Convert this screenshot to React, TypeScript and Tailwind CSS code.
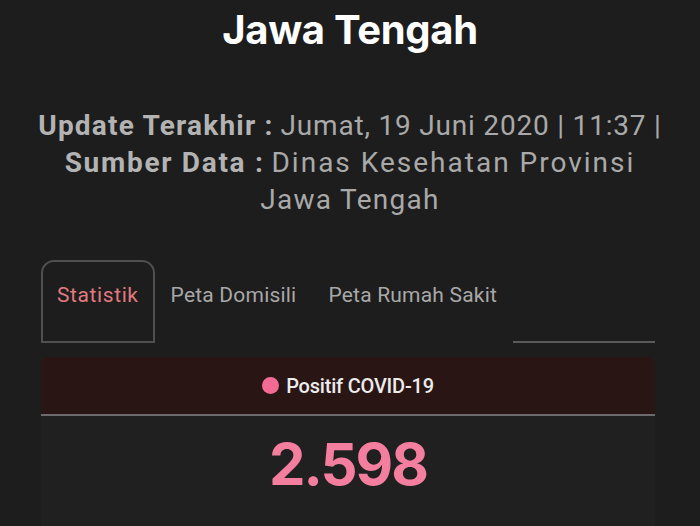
import React from 'react';

const tabs = ['Statistik', 'Peta Domisili', 'Peta Rumah Sakit'];

export default function App() {
  return (
    <div className="w-[700px] h-[526px] overflow-hidden bg-[#1d1d1d] font-['Roboto',sans-serif]">
      {/* Title */}
      <h1 className="pt-[5px] text-center font-['Inter',sans-serif] text-[40px] leading-[50px] font-bold text-white tracking-[-0.3px]">
        Jawa Tengah
      </h1>

      {/* Update info */}
      <div className="mt-[52px] text-center text-[28px] leading-[37px] text-[#a9a9a9]">
        <p>
          <span className="font-bold text-[#b3b3b3] tracking-[1.2px]">Update Terakhir :</span>{' '}
          <span className="tracking-[0.8px]">Jumat, 19 Juni 2020 | 11:37 |</span>
        </p>
        <p>
          <span className="font-bold text-[#b3b3b3] tracking-[1.7px]">Sumber Data :</span>{' '}
          <span className="tracking-[2px]">Dinas Kesehatan Provinsi</span>
        </p>
        <p className="tracking-[1.3px]">Jawa Tengah</p>
      </div>

      {/* Tabs + card */}
      <div className="ml-[41px] w-[614px] mt-[42px]">
        <div className="flex h-[83px]">
          {tabs.map((t, i) => (
            <div
              key={t}
              className={
                i === 0
                  ? 'px-[14px] pt-[19px] rounded-t-[13px] border-2 border-[#4f4f4f] text-[#e07a7e] text-[21px] leading-[28px] tracking-[0.6px]'
                  : 'px-[16px] pt-[21px] text-[#a8a8a8] text-[21px] leading-[28px] tracking-[0.2px]'
              }
            >
              {t}
            </div>
          ))}
          <div className="flex-1 border-b-2 border-[#5a5a5a]" />
        </div>

        <div className="mt-[14px] bg-[#202020] h-[200px]">
          <div className="h-[59px] bg-[#2a1515] rounded-t-[6px] border-b-2 border-[#6b6b6b] flex items-center justify-center gap-[7px]">
            <span className="w-[17px] h-[17px] rounded-full bg-[#f36b94]" />
            <span className="text-[20px] font-medium text-[#ececec] tracking-[-0.2px]">Positif COVID-19</span>
          </div>
          <div className="pt-[16px] text-center font-['Inter',sans-serif] text-[58px] leading-[64px] font-bold text-[#f47e9e] tracking-[-2px]">
            2.598
          </div>
        </div>
      </div>
    </div>
  );
}
